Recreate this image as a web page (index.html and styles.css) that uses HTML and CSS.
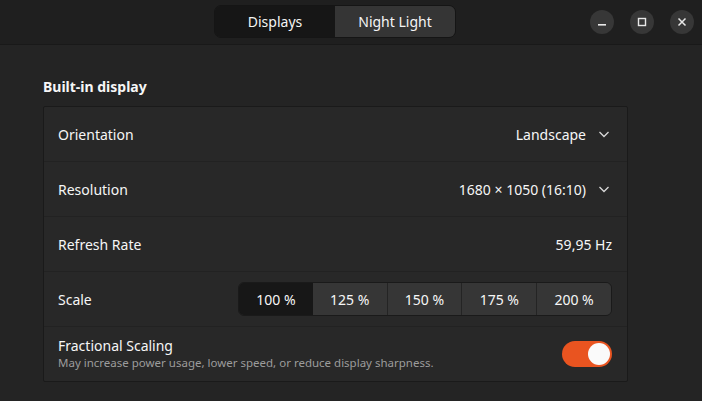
FILE: index.html
```html
<!DOCTYPE html>
<html>
<head>
<meta charset="utf-8">
<link rel="stylesheet" href="styles.css">
</head>
<body>
<header class="headerbar">
  <div class="switcher">
    <button class="tab active">Displays</button>
    <button class="tab">Night Light</button>
  </div>
  <div class="controls">
    <span class="wbtn"><svg width="24" height="24" viewBox="0 0 24 24"><rect x="8" y="14" width="8" height="1.6" fill="#e8e8e8"/></svg></span>
    <span class="wbtn"><svg width="24" height="24" viewBox="0 0 24 24"><rect x="8.5" y="8.5" width="7" height="7" fill="none" stroke="#e8e8e8" stroke-width="1.4"/></svg></span>
    <span class="wbtn"><svg width="24" height="24" viewBox="0 0 24 24"><path d="M8.5 8.5L15.5 15.5M15.5 8.5L8.5 15.5" stroke="#e8e8e8" stroke-width="1.5"/></svg></span>
  </div>
</header>
<main class="content">
  <h2 class="group-title">Built-in display</h2>
  <div class="card">
    <div class="row">
      <span class="label">Orientation</span>
      <span class="value">Landscape <svg class="chev" width="12" height="12" viewBox="0 0 12 12"><path d="M1.5 4L6 8.5L10.5 4" fill="none" stroke="#d8d8d8" stroke-width="1.3"/></svg></span>
    </div>
    <div class="row">
      <span class="label">Resolution</span>
      <span class="value">1680 × 1050 (16:10) <svg class="chev" width="12" height="12" viewBox="0 0 12 12"><path d="M1.5 4L6 8.5L10.5 4" fill="none" stroke="#d8d8d8" stroke-width="1.3"/></svg></span>
    </div>
    <div class="row">
      <span class="label">Refresh Rate</span>
      <span class="value">59,95 Hz</span>
    </div>
    <div class="row">
      <span class="label">Scale</span>
      <div class="scale">
        <span class="seg active">100 %</span>
        <span class="seg">125 %</span>
        <span class="seg">150 %</span>
        <span class="seg">175 %</span>
        <span class="seg">200 %</span>
      </div>
    </div>
    <div class="row">
      <div class="texts">
        <span class="label">Fractional Scaling</span>
        <span class="sub">May increase power usage, lower speed, or reduce display sharpness.</span>
      </div>
      <span class="toggle"><span class="knob"></span></span>
    </div>
  </div>
</main>
</body>
</html>
```

FILE: styles.css
```css
* { box-sizing: border-box; }
html, body { margin: 0; padding: 0; }
body {
  background: #242424;
  color: #f6f6f6;
  font-family: "Noto Sans", "Open Sans", sans-serif;
  font-size: 14px;
  width: 702px;
  height: 401px;
  overflow: hidden;
}
.headerbar {
  height: 45px;
  background: #1f1f1f;
  border-bottom: 1px solid #191919;
  display: flex;
  align-items: flex-start;
  justify-content: space-between;
  padding: 5px 8px 0 214px;
}
.switcher {
  display: flex;
  width: 242px;
  height: 33px;
  border: 1px solid #151515;
  border-radius: 7px;
  overflow: hidden;
}
.tab {
  flex: 1;
  border: none;
  margin: 0;
  font: inherit;
  font-size: 14px;
  color: #f4f4f4;
  background: #353535;
  padding: 0;
}
.tab.active { background: #161616; }
.controls {
  display: flex;
  gap: 16px;
  padding-top: 5px;
}
.wbtn {
  width: 24px;
  height: 24px;
  border-radius: 50%;
  background: #373737;
  display: flex;
}
.content {
  padding: 32px 74px 0 43px;
}
.group-title {
  margin: 0 0 9px 0;
  font-size: 14px;
  font-weight: 700;
  line-height: 20px;
}
.card {
  background: #282828;
  border: 1px solid #1a1a1a;
  border-radius: 2px;
}
.row {
  height: 55px;
  display: flex;
  align-items: center;
  justify-content: space-between;
  padding: 0 15px 0 14px;
  border-top: 1px solid #222222;
}
.row:first-child { border-top: none; height: 54px; }
.label { font-size: 14px; }
.value {
  display: flex;
  align-items: center;
  gap: 12px;
}
.chev { margin-right: 2px; }
.scale {
  display: flex;
  width: 374px;
  height: 34px;
  border: 1px solid #1a1a1a;
  border-radius: 6px;
  overflow: hidden;
}
.seg {
  flex: 1;
  display: flex;
  align-items: center;
  justify-content: center;
  background: #363636;
  border-left: 1px solid #242424;
}
.seg.active { background: #171717; border-left: none; }
.seg.active + .seg { border-left: none; }
.texts {
  display: flex;
  flex-direction: column;
  line-height: 17px;
}
.sub {
  font-size: 11.5px;
  color: #9c9c9c;
}
.toggle {
  width: 50px;
  height: 26px;
  border-radius: 13px;
  background: #e95420;
  display: flex;
  justify-content: flex-end;
  align-items: center;
  padding: 2px;
}
.knob {
  width: 22px;
  height: 22px;
  border-radius: 50%;
  background: #fafafa;
}
```
